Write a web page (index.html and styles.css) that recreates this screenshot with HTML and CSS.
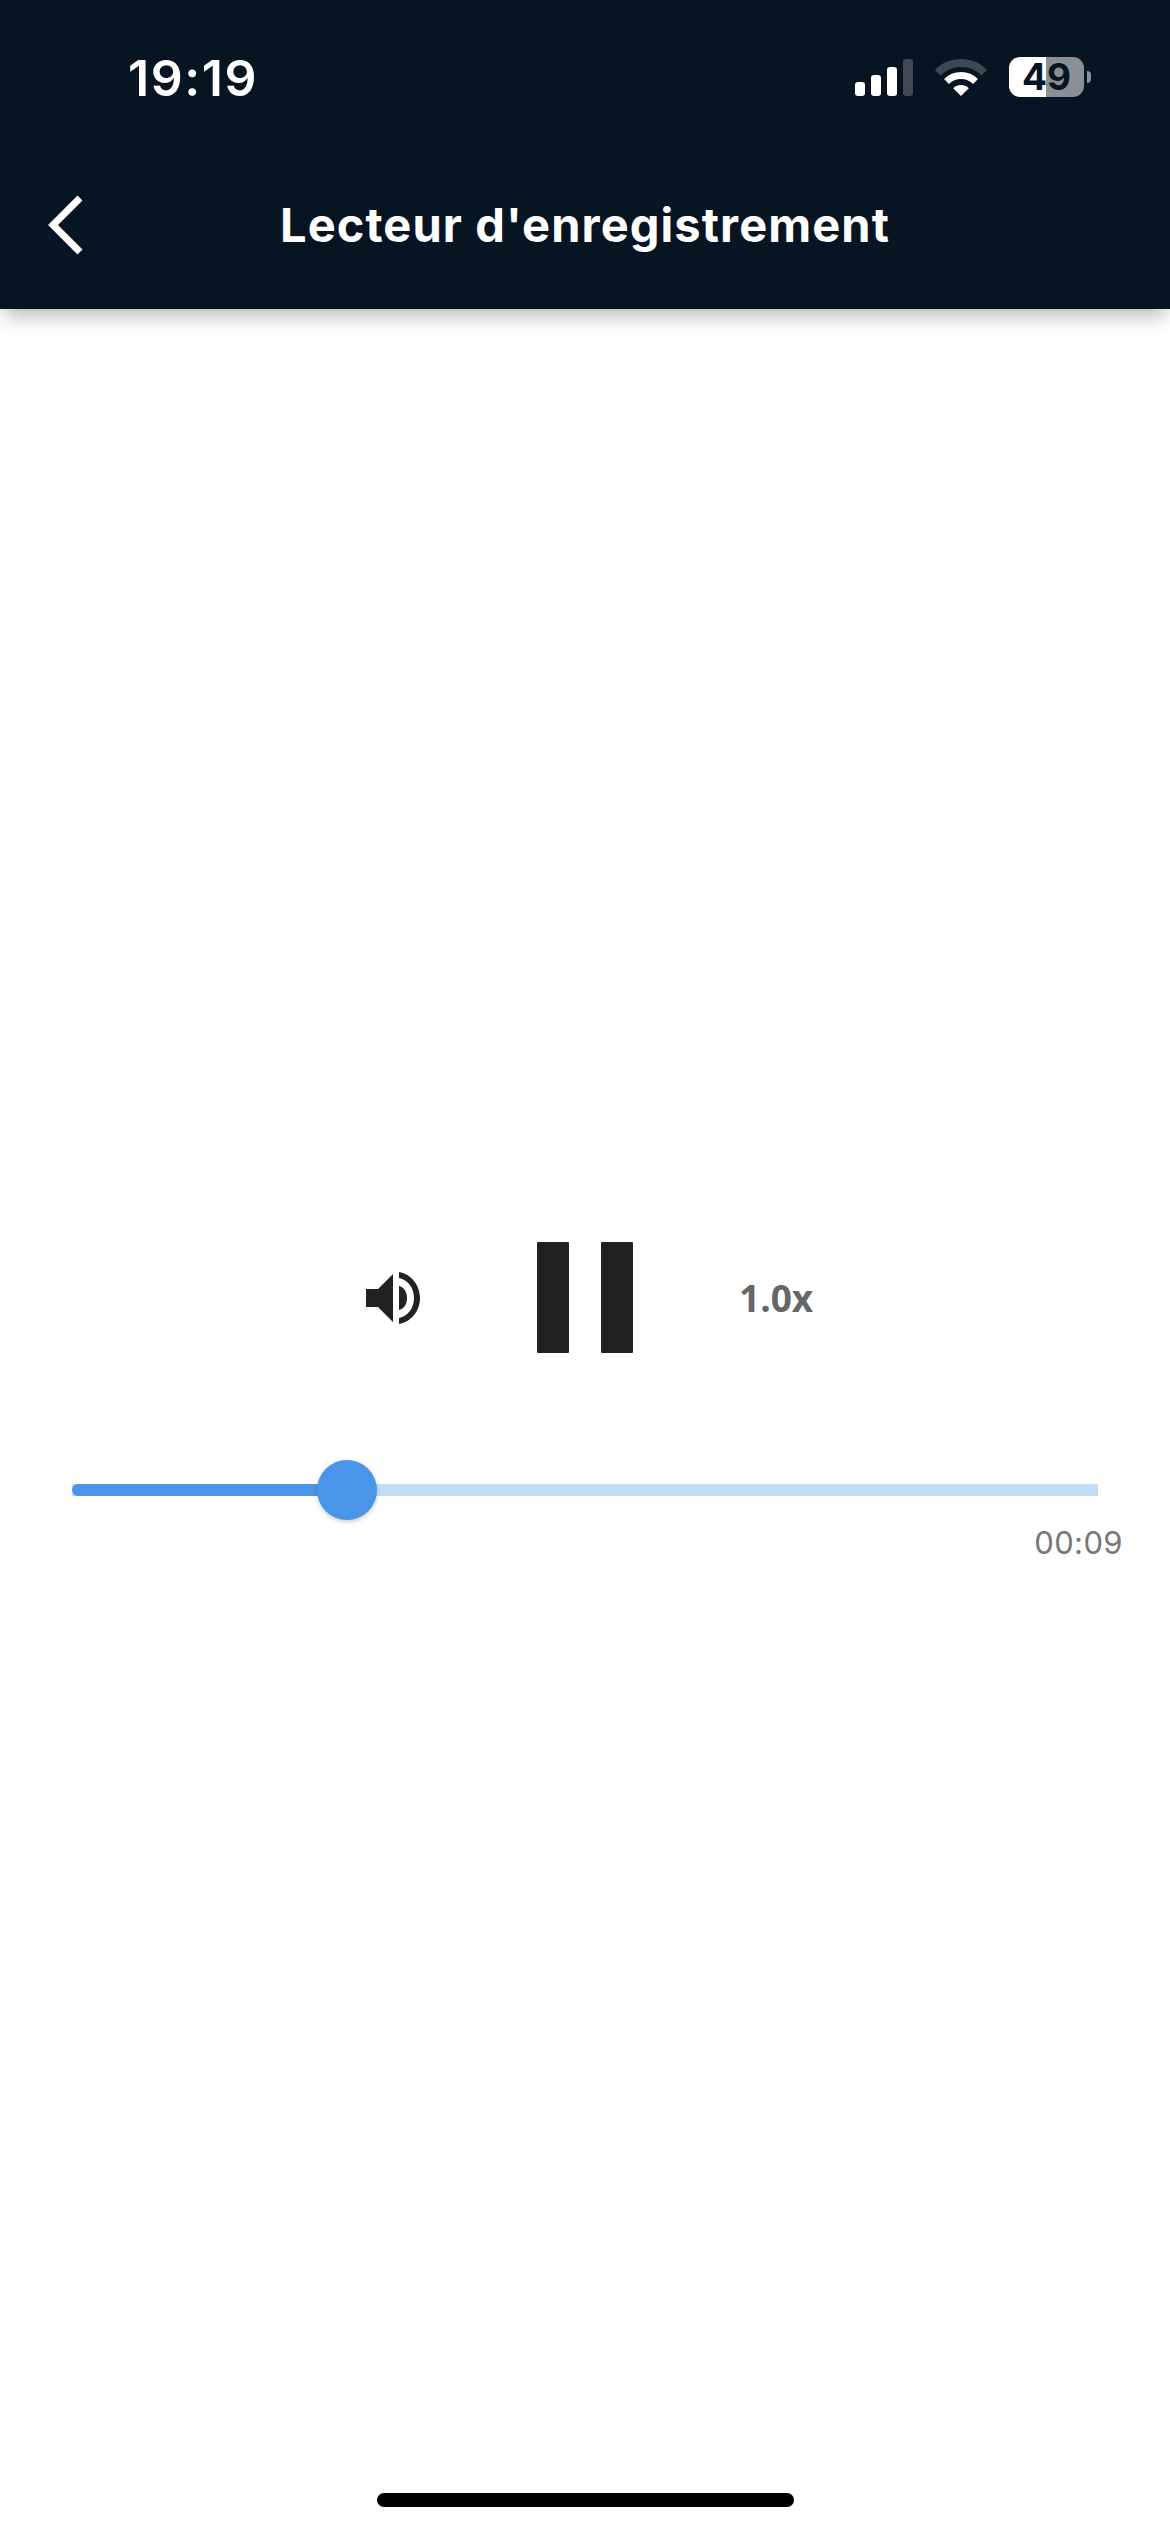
FILE: index.html
```html
<!DOCTYPE html>
<html lang="fr">
<head>
    <meta charset="UTF-8">
    <title>Lecteur d'enregistrement</title>
    <link rel="stylesheet" href="styles.css">
</head>
<body>

    <header class="header">
        <div class="status-bar">
            <span class="clock">19:19</span>
            <div class="status-icons">
                <svg class="signal" width="58" height="37" viewBox="0 0 58 37">
                    <rect x="0" y="23" width="10" height="14" rx="3" fill="#fff"/>
                    <rect x="16" y="16" width="10" height="21" rx="3" fill="#fff"/>
                    <rect x="32" y="8" width="10" height="29" rx="3" fill="#fff"/>
                    <rect x="48" y="0" width="10" height="37" rx="3" fill="#3f4853"/>
                </svg>
                <svg class="wifi" width="52" height="38" viewBox="0 0 52 38">
                    <path d="M2.7 13.7A33 33 0 0 1 49.3 13.7" fill="none" stroke="#3f4853" stroke-width="8"/>
                    <path d="M11.5 22.5A20.5 20.5 0 0 1 40.5 22.5" fill="none" stroke="#fff" stroke-width="7"/>
                    <path d="M26 37L18.2 29.2A11 11 0 0 1 33.8 29.2Z" fill="#fff"/>
                </svg>
                <div class="battery">
                    <span class="battery-level">49</span>
                    <span class="battery-nub"></span>
                </div>
            </div>
        </div>
        <div class="nav-bar">
            <svg class="back" width="36" height="60" viewBox="0 0 36 60">
                <path d="M33 3L6 30L33 57" fill="none" stroke="#fff" stroke-width="7"/>
            </svg>
            <h1 class="title">Lecteur d'enregistrement</h1>
        </div>
    </header>

    <main class="player">
        <div class="controls">
            <svg class="volume" width="54" height="52" viewBox="0 0 54 52">
                <path d="M0 17H12L27 2V50L12 35H0Z" fill="#222"/>
                <path d="M33 14C38 15 41 20 41 26C41 32 38 37 33 38Z" fill="#222"/>
                <path d="M33 0C45 2 54 13 54 26C54 39 45 50 33 52V46C42 44 48 36 48 26C48 16 42 8 33 6Z" fill="#222"/>
            </svg>
            <div class="pause">
                <span class="pause-bar"></span>
                <span class="pause-bar"></span>
            </div>
            <span class="speed">1.0x</span>
        </div>

        <div class="slider">
            <div class="slider-fill" style="width: 26.8%"></div>
            <div class="slider-thumb" style="left: 26.8%"></div>
        </div>
        <div class="duration">00:09</div>
    </main>

    <footer class="home-area">
        <div class="home-indicator"></div>
    </footer>

</body>
</html>
```

FILE: styles.css
```css
* {
    box-sizing: border-box;
}

body {
    margin: 0;
    width: 1170px;
    height: 2532px;
    display: flex;
    flex-direction: column;
    background-color: #ffffff;
    font-family: Inter, "Liberation Sans", sans-serif;
    overflow: hidden;
}

.header {
    height: 309px;
    background-color: #071421;
    box-shadow: 0 10px 20px -4px rgba(0, 0, 0, 0.3);
    color: #ffffff;
}

.status-bar {
    height: 141px;
    padding: 48px 86px 0 128px;
    display: flex;
    justify-content: space-between;
    align-items: flex-start;
}

.clock {
    font-size: 50px;
    font-weight: 600;
    line-height: 60px;
    letter-spacing: 1.6px;
}

.status-icons {
    display: flex;
    align-items: flex-start;
    padding-top: 11px;
}

.wifi {
    margin-left: 22px;
}

.battery {
    position: relative;
    margin-left: 22px;
    margin-top: -2px;
    width: 75px;
    height: 40px;
}

.battery-level {
    display: block;
    height: 40px;
    border-radius: 11px;
    background: linear-gradient(to right, #ffffff 37px, #8a8f96 37px);
    color: #071421;
    font-size: 37px;
    font-weight: 700;
    line-height: 40px;
    text-align: center;
}

.battery-nub {
    position: absolute;
    left: 78px;
    top: 14px;
    width: 4px;
    height: 12px;
    border-radius: 0 6px 6px 0;
    background-color: #8a8f96;
}

.nav-bar {
    position: relative;
    display: flex;
    justify-content: center;
    align-items: center;
    height: 168px;
}

.back {
    position: absolute;
    left: 47px;
    top: 54px;
}

.title {
    margin: 0;
    font-size: 47px;
    font-weight: 700;
    line-height: 56px;
    letter-spacing: 1.1px;
}

.player {
    flex: 1;
    padding-top: 933px;
}

.controls {
    display: flex;
    justify-content: center;
    align-items: center;
    height: 111px;
}

.volume {
    margin-right: 117px;
    margin-left: 9px;
}

.pause {
    display: flex;
    gap: 32px;
}

.pause-bar {
    width: 32px;
    height: 111px;
    border-radius: 1px;
    background-color: #222222;
}

.speed {
    margin-left: 106px;
    width: 74px;
    font-family: "Open Sans", sans-serif;
    font-size: 37px;
    font-weight: 700;
    white-space: nowrap;
    color: #666666;
}

.slider {
    position: relative;
    height: 12px;
    margin: 131px 72px 0;
    background-color: #c0dcf8;
}

.slider-fill {
    height: 12px;
    border-radius: 6px 0 0 6px;
    background-color: #4a94ea;
}

.slider-thumb {
    position: absolute;
    top: -24px;
    width: 60px;
    height: 60px;
    margin-left: -30px;
    border-radius: 50%;
    background-color: #4a94ea;
    box-shadow: 0 2px 4px rgba(0, 0, 0, 0.2);
}

.duration {
    margin-top: 28px;
    padding-right: 47px;
    text-align: right;
    font-size: 31px;
    line-height: 38px;
    letter-spacing: 0.4px;
    color: #777777;
}

.home-area {
    height: 39px;
    display: flex;
    justify-content: center;
}

.home-indicator {
    width: 417px;
    height: 14px;
    border-radius: 7px;
    background-color: #000000;
}
```
